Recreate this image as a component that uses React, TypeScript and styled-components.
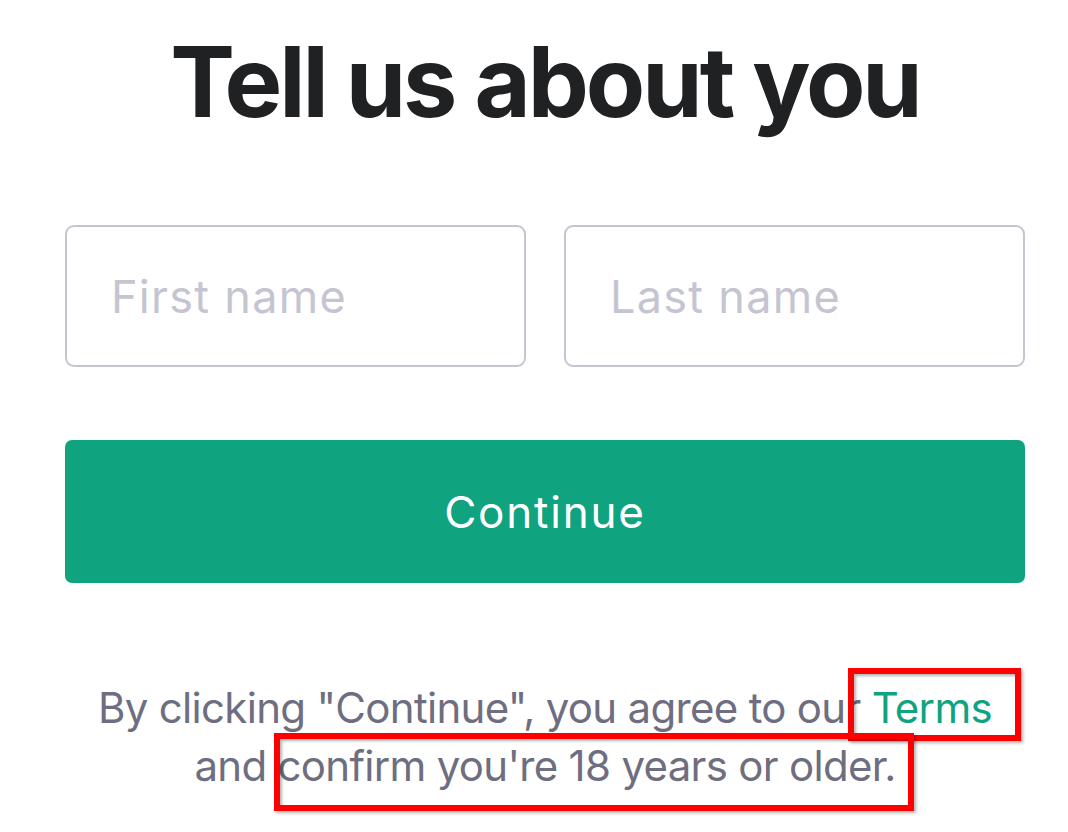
import styled, { createGlobalStyle } from "styled-components";

const GlobalStyle = createGlobalStyle`
  body {
    margin: 0;
    background: #fff;
    font-family: Inter, "Noto Sans", sans-serif;
  }
`;

const Page = styled.div`
  width: 960px;
  min-height: 832px;
  padding: 0 0 0 65px;
  display: flex;
  flex-direction: column;
  align-items: center;
`;

const Title = styled.h1`
  margin: 22px 0 0;
  font-size: 97px;
  line-height: 120px;
  font-weight: 700;
  color: #202123;
  letter-spacing: -3px;
`;

const NameRow = styled.div`
  width: 100%;
  margin-top: 83px;
  display: grid;
  grid-template-columns: 1fr 1fr;
  gap: 38px;
`;

const NameInput = styled.input`
  box-sizing: border-box;
  height: 142px;
  width: 100%;
  border: 2.5px solid #c5c5d2;
  border-radius: 9px;
  padding: 0 44px;
  font-family: inherit;
  font-size: 45px;
  letter-spacing: 1.3px;
  color: #202123;
  outline: none;

  &::placeholder {
    color: #c5c5d2;
  }
`;

const ContinueButton = styled.button`
  width: 100%;
  height: 143px;
  margin-top: 73px;
  border: none;
  border-radius: 7px;
  background: #10a37f;
  color: #fff;
  font-family: inherit;
  font-size: 44px;
  letter-spacing: 1.8px;
  cursor: pointer;
`;

const Notice = styled.p`
  position: relative;
  align-self: stretch;
  margin: 96px 0 0;
  text-align: center;
  font-size: 42px;
  line-height: 58px;
  letter-spacing: -0.7px;
  color: #6e6e80;
`;

const TermsLink = styled.a`
  color: #10a37f;
  text-decoration: none;
`;

const Highlight = styled.span<{ $left: number; $top: number; $w: number; $h: number }>`
  position: absolute;
  left: ${(p) => p.$left}px;
  top: ${(p) => p.$top}px;
  width: ${(p) => p.$w}px;
  height: ${(p) => p.$h}px;
  box-sizing: border-box;
  border: 6px solid #ff0000;
  box-shadow: 2px 2px 3px rgba(0, 0, 0, 0.3), inset 2px 2px 3px rgba(0, 0, 0, 0.3);
  pointer-events: none;
`;

export default function App() {
  return (
    <>
      <GlobalStyle />
      <Page>
        <Title>Tell us about you</Title>
        <NameRow>
          <NameInput placeholder="First name" />
          <NameInput placeholder="Last name" />
        </NameRow>
        <ContinueButton>Continue</ContinueButton>
        <Notice>
          By clicking "Continue", you agree to our <TermsLink href="#">Terms</TermsLink>
          <br />
          and confirm you're 18 years or older.
          <Highlight $left={783} $top={-11} $w={173} $h={73} />
          <Highlight $left={209} $top={54} $w={640} $h={78} />
        </Notice>
      </Page>
    </>
  );
}
